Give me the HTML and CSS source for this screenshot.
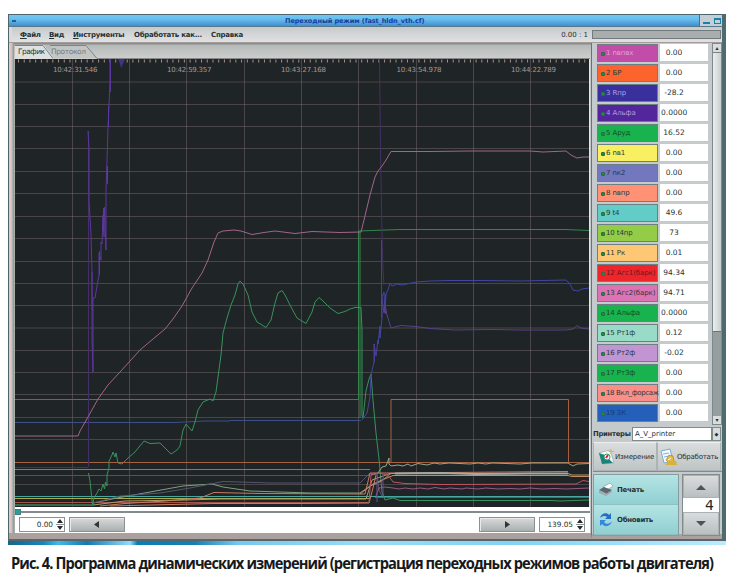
FILE: index.html
```html
<!DOCTYPE html>
<html lang="ru">
<head>
<meta charset="utf-8">
<title>Переходный режим</title>
<link rel="stylesheet" href="styles.css">
</head>
<body>
<figure class="figure">
<div class="desktop">
<div class="window">
  <header class="titlebar"><span class="sysmenu"></span><span class="title">Переходный режим (fast_hldn_vth.cf)</span><span class="winbtns"><i class="min"></i><i class="max"></i></span></header>
  <nav class="menubar">
    <span class="m1"><u>Ф</u>айл</span><span class="m2"><u>В</u>ид</span><span class="m3"><u>И</u>нструменты</span><span class="m4">Обработать как...</span><span class="m5">Справка</span>
    <span class="ratio">0.00 : 1</span><span class="progress"></span>
  </nav>
  <main class="content">
    <section class="notebook">
      <div class="tabs">
        <svg width="576" height="16" viewBox="14 43 576 16">
          <path d="M50 45H87L97 58H54Z" fill="#c3c5c5"/><path d="M50 45.500H86L97 58.500" fill="none" stroke="#7d8383"/>
          <path d="M15 59V45H44L54 59Z" fill="#dfe1e0"/><path d="M15 45.500H43L53 58.500" fill="none" stroke="#7d8383"/>
          <path d="M97 58.500H590" stroke="#858b8b"/>
          <text x="18" y="54" textLength="27" class="tab on">График</text><text x="51" y="54" textLength="35" class="tab">Протокол</text>
        </svg>
      </div>
      <svg class="plot" width="575" height="448" viewBox="15 59 575 448">
        <rect x="15" y="59" width="574" height="448" fill="#1f2426"/>
        <path class="ticks" d="M18 61H589"/>
        <path class="grid" d="M72.500 59V507M129.500 59V507M186.500 59V507M244.500 59V507M301.500 59V507M358.500 59V507M416.500 59V507M473.500 59V507M530.500 59V507M15 82H589M15 104.500H589M15 126.500H589M15 148.500H589M15 171.500H589M15 193.500H589M15 216.500H589M15 238.500H589M15 261.500H589M15 283.500H589M15 305.500H589M15 328H589M15 350.500H589M15 372.500H589M15 394.500H589M15 417.500H589M15 439.500H589M15 484.500H589"/>
        <g class="times"><text x="53" y="72" textLength="44.500">10:42:31.546</text><text x="167" y="72" textLength="44.500">10:42:59.357</text><text x="281" y="72" textLength="45">10:43:27.168</text><text x="396.500" y="72" textLength="45">10:43:54.978</text><text x="511" y="72" textLength="45">10:44:22.789</text></g>
        <g class="lines">
          <path stroke="#a5603f" d="M15 462.500H589M391 462V399.500H568.500V462"/>
          <path stroke="#a2658e" d="M15 469.500H370"/>
          <path stroke="#5c4a70" d="M15 475.500H370"/>
          <path stroke="#433260" d="M15 467.500H88"/>
          <path stroke="#46a7a2" d="M15 496.500H589"/>
          <path stroke="#b0a64b" d="M15 498.500H370"/>
          <path stroke="#a3524b" d="M15 502.500H368"/>
          <path stroke="#356b48" stroke-width="2" d="M15 505H93"/>
          <path stroke="#376ca0" d="M375 497.500H589"/>
          <path stroke="#34854c" d="M15 399.500H358.500V231L400 229.500H565L589 230.500M360 232V418"/>
          <path stroke="#3d4f88" d="M15 422.500H175L205 421H230V420.500H361"/>
          <path stroke="#443067" d="M88.500 131V467M379.500 59L380.500 150L382 235L383 270L384 285"/>
          <path stroke="#5c37a0" d="M88 131L89 148L89 200L91 235L92 272V340L93 372L93 298H95L97 286L99 275V253L101 260V242L102 244L103 215L104 237L104.500 207L106 250L106 190L107 160L108 127L109 105L110 82V59"/>
          <path stroke="#5c37a0" d="M92 272V310M99.500 251V275M103.500 208V231M107.500 166V184M108.500 106V127M110.500 59V92"/>
          <path fill="#433183" stroke="none" d="M118 59H125L122.500 65L121 68L120 64Z"/>
          <path stroke="#a2648a" d="M15 436H78L80 431L88 417L98 399L108 385L120 372L130 361L140 350L153 339L165 329L173 319L182 306L192 288L202 273L208 260L214 242L218 233L223 231L234 230L241 231L252 234.500L264 232.500L275 231L295 233.500L312 231.500L340 232.500L361 232L364 220L370 195L375 177L378 171L382 166L386 160L391 151.500H430L470 151H530L543 152L566 151L571 155L577 158L583 157L589 157"/>
          <path stroke="#38925c" d="M88.500 473L90 481L92.500 505L94 498L97 493L99 489L101 491L103 484L104.500 489L105.500 482L107 486L107 475L109 468L109 461L112 455L113 452L115 457L116 453L118 463L122 464L128 458L135 452L139 447L144 441L150 443.500L160 443L166 449L171 454L177 450L180 446L183 430L186 424L192 431L195 422L198 410L203 402L210 399L213 401L216 392L218 377L221 355L223 333L227 318L231 305L235 295L238 284L240 281L243 284L248 295L252 312L257 322L262 325L266 327.500L271 320L275 303L278 293L282 290.500L285 295L291 307L297 318L306 323.500L312 312L315 302L319 297.500L323 301L330 308L338 313.500L345 311.500L350 309L355 307.500H361L362 330V415L363 418L366 391L369 379L371 374L373 400L376 433L379 459L382 492L385 500L393 498L400 500.500H550L560 501L589 500"/>
          <path stroke="#4146a2" d="M362 420L367 413L370 397L371 375L374 362V344L376 356L378 340L378 344L380 326V338L382 318V297L384 292L385 313L386 294L388 290L390 283L392 286L397 284L402 285L416 282L430 281L451 280.500L480 280.500L520 281L566 280L570 284L573 290L578 291L582 289L589 288"/>
          <path stroke="#4f3a9c" d="M374.500 344V362M381.500 240V318M385.500 294V314"/>
          <path stroke="#59408a" d="M382 298L384 313L385 305L387 315L391 328L401 325.500L416 326.500L430 328.500L455 330L490 329.500L520 330H566L573 329L577 325.500L581 328L589 329"/>
          <path stroke="#7ba17c" d="M93 503L117 498L150 492L183 486L212 484L223 487L250 491L310 493H360L370 486L380 482L391 473.500"/>
          <path stroke="#565674" d="M93 503L120 496L160 493L190 488L223 481.500L270 483L360 483L369 474L377 474L379 490L382 496"/>
          <path stroke="#c97b61" d="M100 506L125 503.500L165 501L200 498L214 492.500L260 493.500L365 494L370 473L390 473L568 471.500M110 506L213 503.500L300 503.500L369 503L373 488L376 475"/>
          <path stroke="#ad9d64" d="M93 505L125 501L185 500L220 499L366 499L372 480L390 473.500H568L572 475H589"/>
          <path stroke="#c98b64" d="M360 494L373 484L382 480L393 475.500H568L572 476.500H589"/>
          <path stroke="#a4aaa0" stroke-width="2" d="M395 473.500L440 473L475 474L530 473.500H568"/>
          <path stroke="#94a789" d="M371 475L378 473L382 467L386 466L389 458V464L391 466L398 465L403 466L408 464L411 466L418 463.500L427 465L434 463L440 464L449 463L470 464L478 463L486 464L492 463L520 464L532 463H568L573 466L577 464L589 463.500"/>
          <path stroke="#bd5460" d="M369 503L371 475L379 473L388 475L393 482L405 483.500L440 484.500L576 484L583 480.500L589 481.500"/>
          <path stroke="#985988" d="M376 496L379 488L385 487L393 488L399 489L405 488L413 489L420 488L428 489L435 487.500L444 489L450 488L462 489L466 488L478 489L486 488L498 489L510 488.500L520 489L530 488L542 489L555 488.500L566 489L577 488.500L589 488"/>
          <path stroke="#6a4e91" d="M377 473V502M383 473V496"/>
        </g>
      </svg>
      <div class="timebar">
        <div class="track"><i></i></div>
        <div class="scrolls"><span class="spin">0.00<svg width="8" height="13"><path d="M1 5L4 1L7 5ZM1 8L4 12L7 8Z" fill="#252b2d"/><path d="M0 6.500H8" stroke="#8e9292"/></svg></span><span class="btn"><svg width="9" height="9"><path d="M6 1V8L1 4.500Z" fill="#303638"/></svg></span><span class="space"></span><span class="btn"><svg width="9" height="9"><path d="M2 1V8L7 4.500Z" fill="#303638"/></svg></span><span class="spin right">139.05<svg width="8" height="13"><path d="M1 5L4 1L7 5ZM1 8L4 12L7 8Z" fill="#252b2d"/><path d="M0 6.500H8" stroke="#8e9292"/></svg></span></div>
      </div>
    </section>
    <aside class="side">
      <div class="params">
        <div class="list">
          <div class="row"><span class="name magenta">1 nвпвх</span><span class="val">0.00</span></div>
          <div class="row"><span class="name orange">2 БР</span><span class="val">0.00</span></div>
          <div class="row"><span class="name indigo">3 Rпр</span><span class="val">-28.2</span></div>
          <div class="row"><span class="name violet">4 Альфа</span><span class="val left">0.0000</span></div>
          <div class="row"><span class="name green">5 Аруд</span><span class="val">16.52</span></div>
          <div class="row"><span class="name yellow">6 nв1</span><span class="val">0.00</span></div>
          <div class="row"><span class="name slate">7 nк2</span><span class="val">0.00</span></div>
          <div class="row"><span class="name salmon">8 nвпр</span><span class="val">0.00</span></div>
          <div class="row"><span class="name aqua">9 t4</span><span class="val">49.6</span></div>
          <div class="row"><span class="name lime">10 t4пр</span><span class="val">73</span></div>
          <div class="row"><span class="name peach">11 Рк</span><span class="val">0.01</span></div>
          <div class="row"><span class="name red">12 Агс1(барк)</span><span class="val">94.34</span></div>
          <div class="row"><span class="name pink">13 Агс2(барк)</span><span class="val">94.71</span></div>
          <div class="row"><span class="name green">14 Альфа</span><span class="val left">0.0000</span></div>
          <div class="row"><span class="name mint">15 Рт1ф</span><span class="val">0.12</span></div>
          <div class="row"><span class="name lilac">16 Рт2ф</span><span class="val">-0.02</span></div>
          <div class="row"><span class="name green">17 Рт3ф</span><span class="val">0.00</span></div>
          <div class="row"><span class="name rose">18 Вкл_форсаж</span><span class="val">0.00</span></div>
          <div class="row"><span class="name blue">19 ЗК</span><span class="val">0.00</span></div>
        </div>
        <div class="vscroll"><b>▴</b><i></i><em></em><b>▾</b></div>
      </div>
      <div class="printers"><b>Принтеры</b><span class="combo">A_V_printer</span><span class="drop">◆</span></div>
      <div class="actions">
        <span class="action"><svg width="17" height="18" viewBox="0 0 17 18"><path d="M1 5L12 2L16 15L5 16Z" fill="#f5f9f8" stroke="#98aaa7" stroke-width=".7"/><path d="M1 5L7 7L15 15L4 16Z" fill="#1b8379"/><circle cx="9" cy="9" r="3" fill="#fff" stroke="#397" /><path d="M8 10L10 7" stroke="#d22" stroke-width="2"/><path d="M13 1V6M10.500 3.500H16" stroke="#e5b736"/></svg>Измерение</span>
        <span class="action"><svg width="17" height="18" viewBox="0 0 17 18"><path d="M1 3L10 1L13 13L4 15Z" fill="#f4faff" stroke="#7ca9cd"/><path d="M3 6L9 5M4 9L9 8" stroke="#80b4dc"/><path d="M6 12L9 7L13 8L14 13L10 16Z" fill="#e8b940" stroke="#a17b21" stroke-width=".6"/><path d="M5 17L9 13L16 13L17 17Z" fill="#d9b23c"/><path d="M8 12L11 10" stroke="#fff"/></svg>Обработать</span>
      </div>
      <div class="bottom">
        <div class="commands">
          <span><svg width="16" height="15" viewBox="0 0 16 15"><path d="M5 5L12 1L15 4L9 8Z" fill="#fff" stroke="#829297" stroke-width=".6"/><path d="M1 8L6 5L14 8L9 12Z" fill="#5a696e"/><path d="M1 8V11L8 14L14 10V8L8 12Z" fill="#9eabb0"/></svg>Печать</span>
          <span><svg width="16" height="17" viewBox="0 0 16 17"><path d="M2 7C3 2 9 1 11 4L13 2V8H7L9 6C7 4 4 5 2 7Z" fill="#236fc6"/><path d="M14 10C13 15 7 17 4 13L2 15V9H8L6 11C8 14 12 13 14 10Z" fill="#3288de"/></svg>Обновить</span>
        </div>
        <div class="counter"><span class="step"><svg width="12" height="8"><path d="M1 7L6 2L11 7Z" fill="#4a5557"/></svg></span><strong>4</strong><span class="step"><svg width="12" height="8"><path d="M1 1L6 6L11 1Z" fill="#4a5557"/></svg></span></div>
      </div>
    </aside>
  </main>
</div>
<div class="wallpaper"></div>
</div>
<figcaption><svg width="710" height="28" viewBox="0 0 710 28"><text x="0" y="19" transform="scale(.89 1)" textLength="790" lengthAdjust="spacing">Рис. 4. Программа динамических измерений (регистрация переходных режимов работы двигателя)</text></svg></figcaption>
</figure>
</body>
</html>
```
FILE: styles.css
```css
*, *::before { box-sizing: border-box; }
body { margin: 0; background: #fff; font-family: "DejaVu Sans", sans-serif; font-size: 7.3px; color: #263236; overflow: hidden; }
svg { display: block; flex: none; }
.figure { margin: 14px 0 0 8px; width: 718px; }
.desktop { height: 531px; display: flex; flex-direction: column; }
.window { height: 527px; border: 1px solid #4d666d; border-right: 4px solid #4f6970; border-bottom: 2px solid #596569; background: #c8cccc; display: flex; flex-direction: column; }
.wallpaper { height: 4px; background: linear-gradient(90deg, #16658b 0, #1688bd 5%, #42b9e8 7%, #1279b1 11%, #95dcf5 17%, #087db5 18%, #187fb1 26%, #75c9ed 32%, #9bdcf5 50%, #80d4f3 70%, #bceaff); }
.titlebar { height: 12px; flex: none; display: flex; align-items: center; background: linear-gradient(#71c8f0, #67bcee 40%, #438ed0); border-bottom: 1px solid #55798c; }
.sysmenu { width: 4px; height: 2px; background: #286181; margin-left: 3px; }
.title { margin-left: 269px; font-size: 6.6px; font-weight: bold; color: #173e9e; letter-spacing: -.12px; white-space: nowrap; }
.winbtns { margin-left: auto; width: 23px; height: 11px; background: #c5ced4; display: flex; align-items: center; gap: 4px; padding-left: 3px; border-left: 1px solid #536f79; }
.min { width: 7px; height: 2px; background: #1681ab; margin-top: 4px; }
.max { width: 7px; height: 6px; border: 1px solid #1681ab; border-top-width: 2px; }
.menubar { height: 15px; flex: none; display: flex; align-items: center; font-size: 7px; font-weight: bold; background: linear-gradient(#c8caca, #dfe1e3); padding-left: 11px; white-space: nowrap; border-left: 3px solid #dedada; }
.menubar u { text-underline-offset: 1px; }
.menubar span { flex: none; letter-spacing: -.25px; }
.menubar .m1 { width: 29px; margin-left: -3px; }
.m2 { width: 24px; } .m3 { width: 61px; } .m4 { width: 77px; } .m5 { width: 40px; }
.menubar .ratio { font-weight: normal; margin-left: auto; margin-right: 4px; letter-spacing: 0; }
.progress { width: 129px; height: 9px; background: #a9adad; border: 1px solid #717b7d; margin-right: 1px; }
.content { flex: 1; min-height: 0; display: flex; border-top: 1px solid #a59c99; }
.notebook { width: 582px; padding-left: 6px; background: linear-gradient(90deg, #ddc9c1 0 2px, #bfbbb8 3px, #8c9292 5px, #c4c8c8 6px); border-bottom: 6px solid #aaa19e; flex: none; }
.tabs { height: 16px; background: linear-gradient(#858d8e 0 1px, #b5bab9 2px, #cdcfcd); margin-left: -1px; }
.tab { font-size: 7.5px; fill: #747c7c; }
.tab.on { fill: #273235; }
.plot { width: 575px; height: 448px; background: #dce7e8; }
.grid { fill: none; stroke: #9f8685; stroke-opacity: .34; }
.ticks { stroke: #a88f89; stroke-width: 3; stroke-dasharray: 1 4.720; }
.times { fill: #ab9892; font-size: 7px; }
.lines { fill: none; stroke-width: 1; stroke-linejoin: round; }
.timebar { height: 26px; background: #fff; width: 575px; }
.track { height: 10px; display: flex; align-items: center; background: linear-gradient(#fff 0 4px, #838b8d 4px 6px, #fff 6px); }
.track i { width: 6px; height: 6px; background: #1ba4a0; border: 1px solid #53797a; }
.scrolls { height: 15px; display: flex; padding-left: 4px; padding-right: 5px; }
.spin { width: 46px; height: 15px; background: #fff; border: 1px solid #899293; display: flex; align-items: center; justify-content: flex-end; gap: 3px; }
.btn { width: 56px; height: 15px; margin-left: 4px; background: linear-gradient(#d8dada, #aaafaf); border: 1px solid #899192; box-shadow: inset 1px 1px #e9eaea; display: flex; align-items: center; justify-content: center; }
.space { flex: 1; }
.spin.right { margin-left: 4px; }
.side { flex: 1; border-left: 1px solid #667476; padding-left: 1px; min-width: 0; background: #c5cbcc; border-bottom: 5px solid #aaa19e; }
.params { height: 382px; display: flex; }
.list { width: 119px; padding: 1px 0 0 4px; flex: none; overflow: hidden; height: 382px; }
.row { display: flex; height: 20px; align-items: flex-start; gap: 2px; }
.name { width: 61px; height: 18px; flex: none; border: 1px solid #6c7f84; padding-left: 8px; font-size: 7px; line-height: 17px; white-space: nowrap; position: relative; color: #2a393a; letter-spacing: -.1px; }
.name::before { content: ""; position: absolute; left: 3px; top: 7px; width: 4px; height: 4px; border-radius: 1px; background: #238b45; border: 1px solid #2b6b43; }
.val { width: 48px; height: 17px; line-height: 18px; background: #fff; font-size: 7.500px; text-align: center; white-space: nowrap; padding-right: 20px; }
.val.left { padding-left: 1px; padding-right: 0; text-align: left; }
.magenta { background: #c24da8; color: #e1a1d8; }
.orange { background: #fb642d; } .indigo { background: #39309d; color: #aaa3e1; } .violet { background: #53279b; color: #b59add; }
.green { background: #18b24e; color: #174a28; } .yellow { background: #f8ef61; } .slate { background: #7377be; } .salmon { background: #ff9275; }
.aqua { background: #62ccc7; } .lime { background: #94cc48; } .peach { background: #fec773; } .red { background: #ef252c; color: #611c22; }
.pink { background: #dc73b5; } .mint { background: #98dbc7; } .lilac { background: #c294d2; } .rose { background: #fa8e89; letter-spacing: -.35px; } .blue { background: #2460ba; color: #153d75; }
.vscroll { width: 10px; background: #969e9f; border: 1px solid #7d898c; display: flex; flex-direction: column; }
.vscroll b { height: 8px; font-size: 6px; line-height: 8px; text-align: center; background: #d9dddd; }
.vscroll i { height: 280px; background: linear-gradient(90deg, #eceeee, #c8cece); border-top: 1px solid #778284; border-bottom: 1px solid #697578; }
.vscroll em { flex: 1; }
.printers { height: 17px; display: flex; align-items: center; }
.printers b { width: 39px; font-size: 6.8px; letter-spacing: -.25px; }
.combo { width: 80px; height: 14px; line-height: 12px; padding-left: 2px; background: #fff; border: 1px solid #7f8b8d; font-size: 7px; }
.drop { width: 9px; height: 14px; font-size: 5px; line-height: 12px; text-align: center; background: #d8dcdc; border: 1px solid #7f8b8d; }
.actions { height: 30px; display: flex; border-bottom: 1px solid #7f8b8d; }
.action { width: 64px; height: 29px; flex: none; display: flex; align-items: center; padding-left: 4px; background: linear-gradient(#dadddd, #bfc4c5); border: 1px solid #abb3b4; border-top-color: #eee; white-space: nowrap; font-size: 7px; letter-spacing: -.18px; }
.action + .action { padding-left: 2px; letter-spacing: -.25px; }
.bottom { height: 64px; display: flex; padding-top: 2px; }
.commands { width: 86px; height: 62px; border: 1px solid #849da0; flex: none; }
.commands span { height: 30px; display: flex; align-items: center; gap: 3px; padding-left: 4px; font-size: 7px; font-weight: bold; letter-spacing: -.3px; background: linear-gradient(#b5e4e4, #91cfd1); border-bottom: 1px solid #8ec1c3; }
.counter { margin-left: 3px; width: 38px; height: 62px; border: 1px solid #7f8b8d; }
.step { height: 23px; display: flex; align-items: center; justify-content: center; background: linear-gradient(#dadcdc, #b9bfc0); border: 1px solid #aab2b3; }
.counter strong { display: block; height: 14px; line-height: 14px; text-align: right; padding-right: 5px; font-size: 14px; font-weight: normal; background: #fff; color: #202628; }
figcaption { height: 28px; padding: 5px 0 0 3px; }
figcaption svg { overflow: visible; }
figcaption text { font-family: "Open Sans", "Noto Sans", sans-serif; font-size: 16.500px; font-weight: bold; fill: #17191a; }
```
